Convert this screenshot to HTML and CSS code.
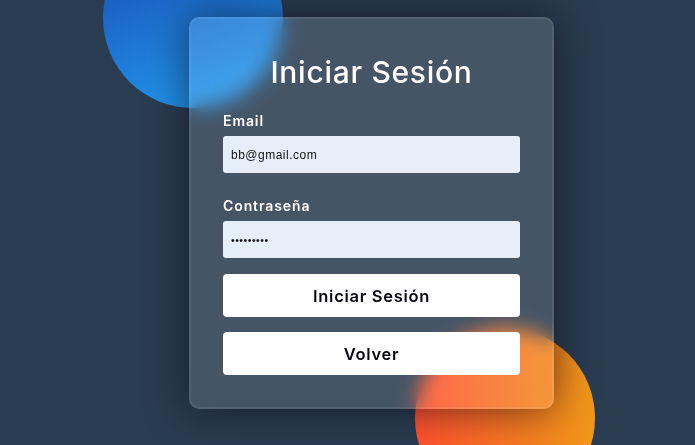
FILE: index.html
```html
<!DOCTYPE html>
<html lang="es">
<head>
<meta charset="utf-8">
<title>Iniciar Sesión</title>
<link rel="stylesheet" href="styles.css">
</head>
<body>
<div class="background">
  <div class="shape shape-blue"></div>
  <div class="shape shape-orange"></div>
</div>
<main class="page">
  <form class="login-card" onsubmit="return false">
    <h3 class="login-title">Iniciar Sesión</h3>
    <label class="field-label" for="email">Email</label>
    <input class="field-input" id="email" type="text" value="bb@gmail.com">
    <label class="field-label field-label-second" for="password">Contraseña</label>
    <input class="field-input field-password" id="password" type="password" value="123456789">
    <button class="btn btn-primary" type="submit">Iniciar Sesión</button>
    <button class="btn btn-secondary" type="button">Volver</button>
  </form>
</main>
</body>
</html>
```
FILE: styles.css
```css
* {
  box-sizing: border-box;
}

html, body {
  margin: 0;
  padding: 0;
}

body {
  background: #2a3c50;
  width: 695px;
  height: 445px;
  overflow: hidden;
  position: relative;
  font-family: "Inter", "Noto Sans", sans-serif;
}

.background {
  position: absolute;
  inset: 0;
  overflow: hidden;
}

.shape {
  position: absolute;
  width: 180px;
  height: 180px;
  border-radius: 50%;
}

.shape-blue {
  left: 103px;
  top: -72px;
  background: linear-gradient(160deg, #1845ad, #23a2f6);
}

.shape-orange {
  left: 415px;
  top: 328px;
  background: linear-gradient(to right, #ff512f, #f09819);
}

.page {
  position: relative;
  padding: 17px 0 0 189px;
}

.login-card {
  width: 365px;
  height: 392px;
  display: flex;
  flex-direction: column;
  padding: 32px 32px;
  background: rgba(255, 255, 255, 0.13);
  border: 2px solid rgba(255, 255, 255, 0.08);
  border-radius: 10px;
  backdrop-filter: blur(10px);
  -webkit-backdrop-filter: blur(10px);
  box-shadow: 0 0 40px rgba(8, 7, 16, 0.6);
}

.login-title {
  margin: 0;
  height: 42px;
  line-height: 42px;
  font-size: 30px;
  font-weight: 500;
  color: #fff;
  text-align: center;
  letter-spacing: 0.7px;
}

.field-label {
  display: block;
  margin-top: 19px;
  height: 18px;
  line-height: 18px;
  font-size: 14px;
  font-weight: 600;
  color: #fff;
  letter-spacing: 0.9px;
}

.field-label-second {
  margin-top: 24px;
}

.field-input {
  display: block;
  margin-top: 6px;
  height: 37px;
  width: 100%;
  border: none;
  outline: none;
  border-radius: 3px;
  background: #e6eff9;
  padding: 0 8px;
  font-family: "Liberation Sans", Arial, sans-serif;
  font-size: 12px;
  letter-spacing: 0.5px;
  color: #111;
}

.field-password {
  font-size: 10.5px;
}

.btn {
  display: block;
  width: 100%;
  height: 43px;
  border: none;
  border-radius: 4px;
  background: #fff;
  color: #080710;
  font-family: "Inter", "Noto Sans", sans-serif;
  font-size: 16.5px;
  font-weight: 600;
  letter-spacing: 0.7px;
  cursor: pointer;
}

.btn-primary {
  margin-top: 16px;
}

.btn-secondary {
  margin-top: 15px;
}
```
